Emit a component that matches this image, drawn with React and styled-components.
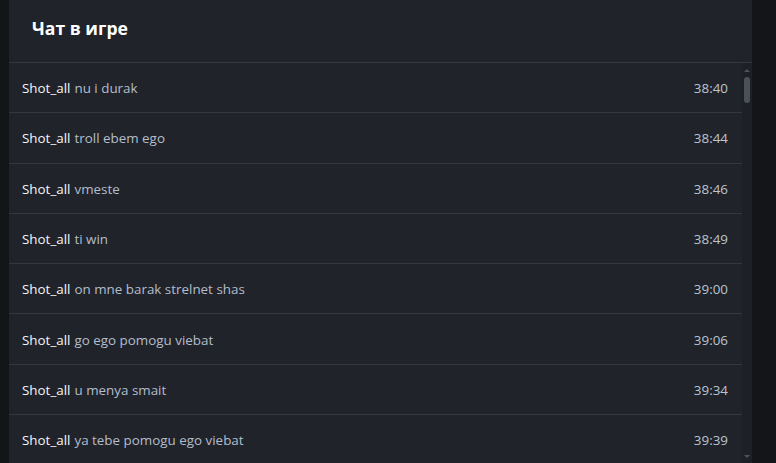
import React from "react";
import styled, { createGlobalStyle } from "styled-components";

const Global = createGlobalStyle`
  html, body { margin: 0; padding: 0; background: #141518; height: 100%; overflow: hidden; }
  #root { height: 100%; }
  * { box-sizing: border-box; }
`;

const Page = styled.div`
  height: 100vh;
  padding: 0 24px 0 9px;
  font-family: "Open Sans", "Noto Sans", sans-serif;
`;

const Panel = styled.section`
  height: 100%;
  background: #20232a;
  display: flex;
  flex-direction: column;
  overflow: hidden;
`;

const Header = styled.header`
  height: 63px;
  flex: none;
  display: flex;
  align-items: center;
  padding: 0 0 6px 23px;
  border-bottom: 1px solid #34373e;
`;

const Title = styled.h2`
  margin: 0;
  font-size: 17.6px;
  font-weight: 700;
  color: #ffffff;
`;

const Body = styled.div`
  flex: 1;
  min-height: 0;
  display: flex;
`;

const List = styled.ul`
  flex: 1;
  margin: 0;
  padding: 0;
  list-style: none;
  overflow: hidden;
`;

const Row = styled.li`
  height: 50.3px;
  display: flex;
  align-items: center;
  justify-content: space-between;
  padding: 1px 14px 0 13px;
  border-bottom: 1px solid #34373e;
  font-size: 13.4px;
`;

const Message = styled.span`
  color: #b4bdcb;
`;

const Author = styled.span`
  color: #f4f5f7;
  margin-right: 4px;
`;

const Time = styled.span`
  color: #bcc3ce;
`;

const ScrollTrack = styled.div`
  width: 10px;
  flex: none;
  background: #1d2026;
  display: flex;
  flex-direction: column;
  align-items: center;
  padding: 4px 0 3px;
`;

const Arrow = styled.div`
  width: 0;
  height: 0;
  border-left: 3px solid transparent;
  border-right: 3px solid transparent;
  ${(p) => (p.$down ? "border-top: 3px solid #4d525b;" : "border-bottom: 3px solid #4d525b;")}
  margin: 2px 0;
`;

const Thumb = styled.div`
  width: 6px;
  height: 26px;
  border-radius: 3px;
  background: #4a4f58;
  margin-top: 3px;
`;

const Spacer = styled.div`
  flex: 1;
`;

const messages = [
  ["nu i durak", "38:40"],
  ["troll ebem ego", "38:44"],
  ["vmeste", "38:46"],
  ["ti win", "38:49"],
  ["on mne barak strelnet shas", "39:00"],
  ["go ego pomogu viebat", "39:06"],
  ["u menya smait", "39:34"],
  ["ya tebe pomogu ego viebat", "39:39"],
];

export default function App() {
  return (
    <>
      <Global />
      <Page>
        <Panel>
          <Header>
            <Title>Чат в игре</Title>
          </Header>
          <Body>
            <List>
              {messages.map(([text, time], i) => (
                <Row key={i}>
                  <Message>
                    <Author>Shot_all</Author>
                    {text}
                  </Message>
                  <Time>{time}</Time>
                </Row>
              ))}
            </List>
            <ScrollTrack>
              <Arrow />
              <Thumb />
              <Spacer />
              <Arrow $down />
            </ScrollTrack>
          </Body>
        </Panel>
      </Page>
    </>
  );
}
